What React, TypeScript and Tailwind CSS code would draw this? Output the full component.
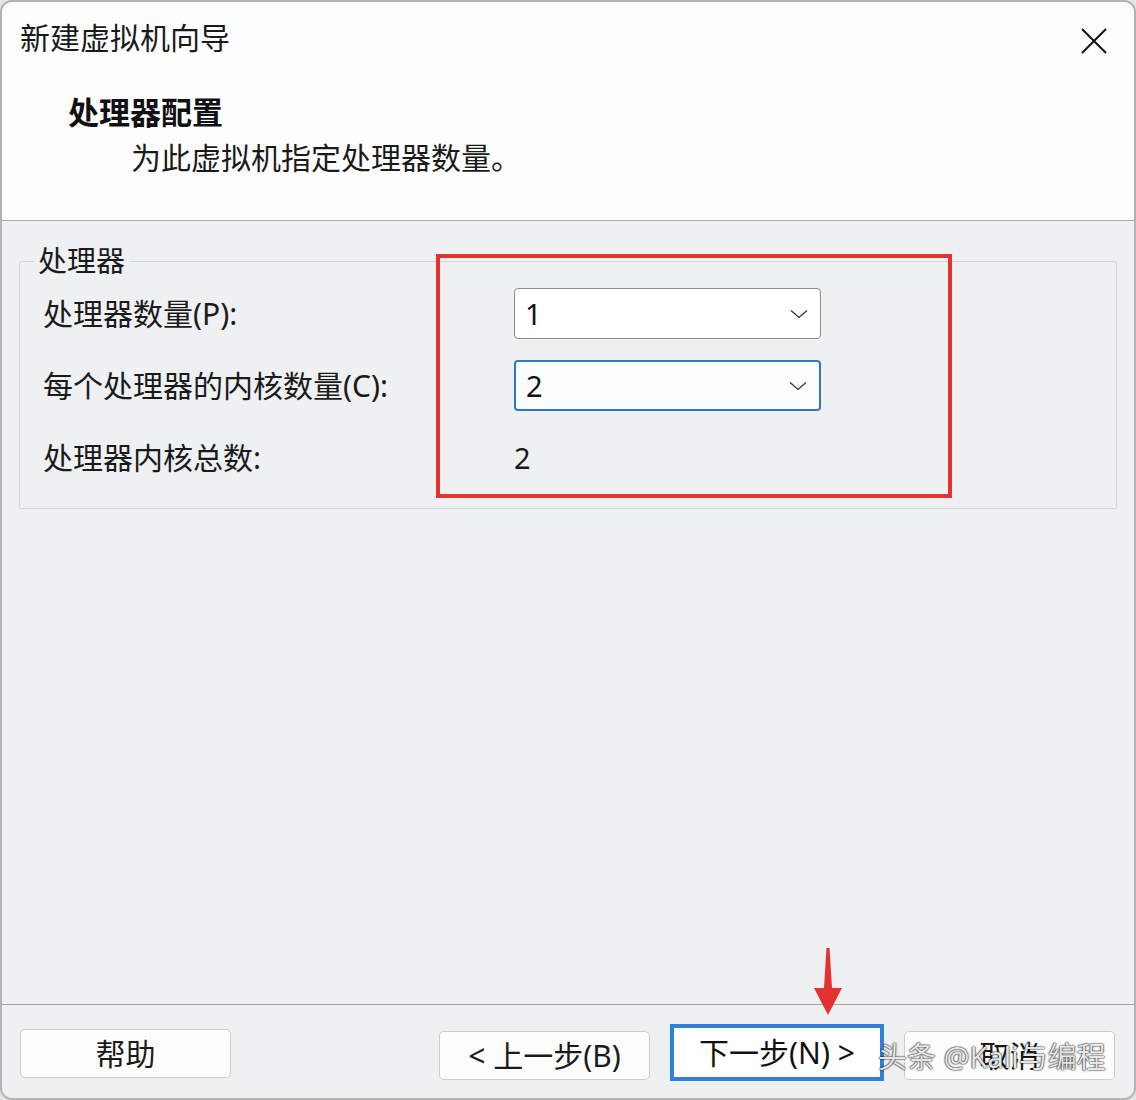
import { useState } from "react";

const font = "font-['Noto_Sans','Noto_Sans_CJK_SC',sans-serif]";

const Chevron = () => (
  <svg width="18" height="10" viewBox="0 0 18 10" fill="none">
    <path d="M1 1.5 L9 8.5 L17 1.5" stroke="#333" strokeWidth="1.3" />
  </svg>
);

const Dropdown = ({ value, focused }: { value: string; focused?: boolean }) => (
  <div
    className={`h-[51px] w-[307px] flex items-center justify-between pl-[10px] pr-[12px] rounded-[4px] ${
      focused
        ? "border-2 border-[#2f76c6] bg-[#fbfdff]"
        : "border border-[#8c8c8c] bg-white"
    }`}
  >
    <span className="text-[29px] leading-none text-[#111]">{value}</span>
    <Chevron />
  </div>
);

const Button = ({ label }: { label: string }) => (
  <button className="h-[49px] w-[211px] rounded-[5px] border border-[#cdcdcd] bg-[#fdfdfd] text-[30px] text-[#1a1a1a] flex items-center justify-center">
    {label}
  </button>
);

export default function App() {
  const [processors] = useState("1");
  const [cores] = useState("2");
  const total = Number(processors) * Number(cores);

  return (
    <div className={`w-[1136px] h-[1100px] bg-[#e4e4e4] ${font}`}>
      <div className="relative w-[1136px] h-[1100px] border-2 border-[#b3b3b3] rounded-[12px] overflow-hidden flex flex-col">
        {/* header */}
        <div className="h-[219px] bg-[#fdfdfe] border-b border-[#a9a9a9] pl-[18px] pt-[16px] relative">
          <div className="text-[30px] leading-[40px] text-[#1a1a1a]">新建虚拟机向导</div>
          <button className="absolute right-[26px] top-[25px]">
            <svg width="28" height="28" viewBox="0 0 28 28" fill="none">
              <path d="M2 2 L26 26 M26 2 L2 26" stroke="#111" strokeWidth="2" />
            </svg>
          </button>
          <div className="mt-[34px] pl-[48px] text-[31px] leading-[40px] font-bold text-[#111]">
            处理器配置
          </div>
          <div className="mt-[6px] pl-[111px] text-[30px] leading-[40px] text-[#1a1a1a]">
            为此虚拟机指定处理器数量。
          </div>
        </div>

        {/* body */}
        <div className="flex-1 bg-[#eff0f2] px-[17px] pt-[20px]">
          <fieldset className="border border-[#d4d5d8] rounded-[2px] p-0 pb-[25px]">
            <legend className="ml-[14px] px-[4px] text-[29px] leading-[40px] text-[#1a1a1a]">
              处理器
            </legend>
            <div className="pt-[7px] pl-[23px] grid grid-cols-[471px_307px] gap-y-[21px] items-center text-[30px] text-[#1a1a1a]">
              <div className="leading-[40px]">处理器数量(P):</div>
              <Dropdown value={processors} />
              <div className="leading-[40px]">每个处理器的内核数量(C):</div>
              <Dropdown value={cores} focused />
              <div className="leading-[51px]">处理器内核总数:</div>
              <div className="leading-[51px] text-[29px]">{total}</div>
            </div>
          </fieldset>
        </div>

        {/* footer */}
        <div className="h-[94px] bg-[#eff0f2] border-t border-[#a3a3a3] flex items-start pl-[18px] pr-[19px] pt-[24px]">
          <Button label="帮助" />
          <div className="flex-1" />
          <div className="flex items-center gap-[20px]">
            <Button label="< 上一步(B)" />
            <button className="-mt-[5px] h-[57px] w-[214px] border-4 border-[#2e80d8] bg-white text-[30px] text-[#111] flex items-center justify-center">
              下一步(N) &gt;
            </button>
            <Button label="取消" />
          </div>
        </div>

        {/* annotation: red box */}
        <div className="absolute left-[434px] top-[252px] w-[516px] h-[244px] border-4 border-[#e5312f] pointer-events-none" />

        {/* annotation: red arrow */}
        <svg
          className="absolute left-[810px] top-[946px] pointer-events-none"
          width="32"
          height="68"
          viewBox="0 0 32 68"
        >
          <path d="M14.5 0 L17.5 0 L20 40 L30 40 L16 67 L2 40 L12 40 Z" fill="#e5312f" />
        </svg>

        {/* watermark */}
        <div className="absolute left-[876px] top-[1035px] text-[29px] leading-[40px] text-white/90 [text-shadow:0_0_2px_#000,0_0_1px_#000] pointer-events-none whitespace-nowrap">
          头条 @Kali与编程
        </div>
      </div>
    </div>
  );
}
